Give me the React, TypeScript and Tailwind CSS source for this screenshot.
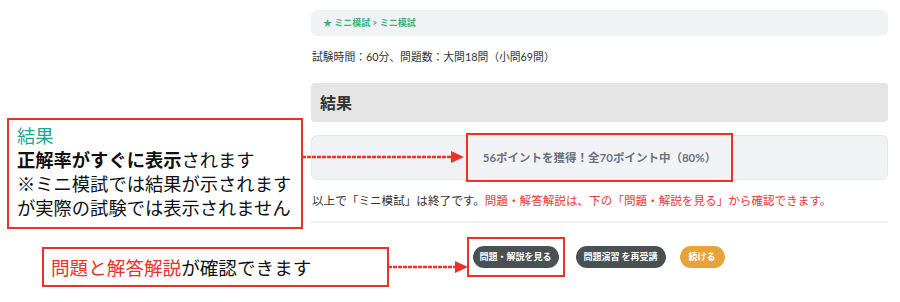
import React from 'react';

const appFont = { fontFamily: '"Lato", "Noto Sans CJK JP", sans-serif' };
const noteFont = { fontFamily: '"Noto Sans CJK JP", sans-serif' };

// red dashed callout arrow
const Arrow: React.FC<{ className: string; width: number }> = ({ className, width }) => (
    <svg className={className} width={width} height={14} viewBox={`0 0 ${width} 14`}>
        <line x1={0} y1={7} x2={width - 10} y2={7} stroke="#e8322a" strokeWidth={2.5} strokeDasharray="4 1" />
        <polygon points={`${width - 13},1 ${width},7 ${width - 13},13`} fill="#e8322a" />
    </svg>
);

const App: React.FC = () => {
    return (
        <div className="relative w-[900px] h-[302px] bg-white overflow-hidden">
            {/* page content */}
            <div className="ml-[311px] w-[577px] pt-[10px] text-[#333]" style={appFont}>
                <div className="h-[26px] rounded-md bg-[#f1f2f6] flex items-center px-[12px]">
                    <span className="text-[9px] font-bold text-[#3cb371]">★ ミニ模試 &gt; ミニ模試</span>
                </div>
                <p className="mt-[13px] text-[10.8px] leading-[16px] pl-[1px]">試験時間：60分、問題数：大問18問（小問69問）</p>
                <div className="mt-[18px] h-[39px] rounded-sm bg-[#e5e5e5] flex items-center px-[9px]">
                    <h2 className="text-[16px] font-bold text-[#333]">結果</h2>
                </div>
                <div className="mt-[13px] h-[45px] rounded-md bg-[#f1f2f6] border border-[#e4e7ec] flex items-center justify-center">
                    <span className="h-[49px] px-[15px] flex items-center border-2 border-[#e8322a] text-[11.5px] font-bold text-[#6b7280]">
                        56ポイントを獲得！全70ポイント中（80%）
                    </span>
                </div>
                <p className="mt-[13px] text-[11.6px] leading-[16px] pl-[1px]">
                    以上で「ミニ模試」は終了です。<span className="text-[#e53935]">問題・解答解説は、下の「問題・解説を見る」から確認できます。</span>
                </p>
                <div className="mt-[12px] h-[2px] bg-[#f0f1f5]" />
                <div className="mt-[23px] flex justify-center items-center pr-[2px]">
                    <span className="-mx-[6px] -my-[9px] px-[4px] py-[7px] border-2 border-[#e8322a] flex">
                        <button className="h-[22px] w-[86px] rounded-full bg-[#4a5152] text-white text-[9px] font-bold">問題・解説を見る</button>
                    </span>
                    <button className="ml-[17px] h-[22px] w-[90px] rounded-full bg-[#4a5152] text-white text-[9px] font-bold">問題演習 を再受講</button>
                    <button className="ml-[14px] h-[22px] w-[45px] rounded-full bg-[#e9a23b] text-white text-[9px] font-bold">続ける</button>
                </div>
            </div>

            {/* annotation callouts */}
            <div
                className="absolute left-[7px] top-[118px] w-[296px] h-[111px] border-2 border-[#e8322a] bg-white pl-[8px] pt-[3px] text-[18.3px] leading-[24px] text-[#111] whitespace-nowrap"
                style={noteFont}
            >
                <div className="text-[#1fa595]">結果</div>
                <div><span className="font-bold">正解率がすぐに表示</span>されます</div>
                <div>※ミニ模試では結果が示されます</div>
                <div>が実際の試験では表示されません</div>
            </div>
            <Arrow className="absolute left-[302px] top-[150px]" width={162} />

            <div
                className="absolute left-[42px] top-[247px] w-[347px] h-[40px] border-2 border-[#e8322a] bg-white px-[7px] flex items-center text-[18.6px] text-[#111] whitespace-nowrap"
                style={noteFont}
            >
                <span className="text-[#e8322a]">問題と解答解説</span>が確認できます
            </div>
            <Arrow className="absolute left-[388px] top-[260px]" width={80} />
        </div>
    );
};

export default App;
